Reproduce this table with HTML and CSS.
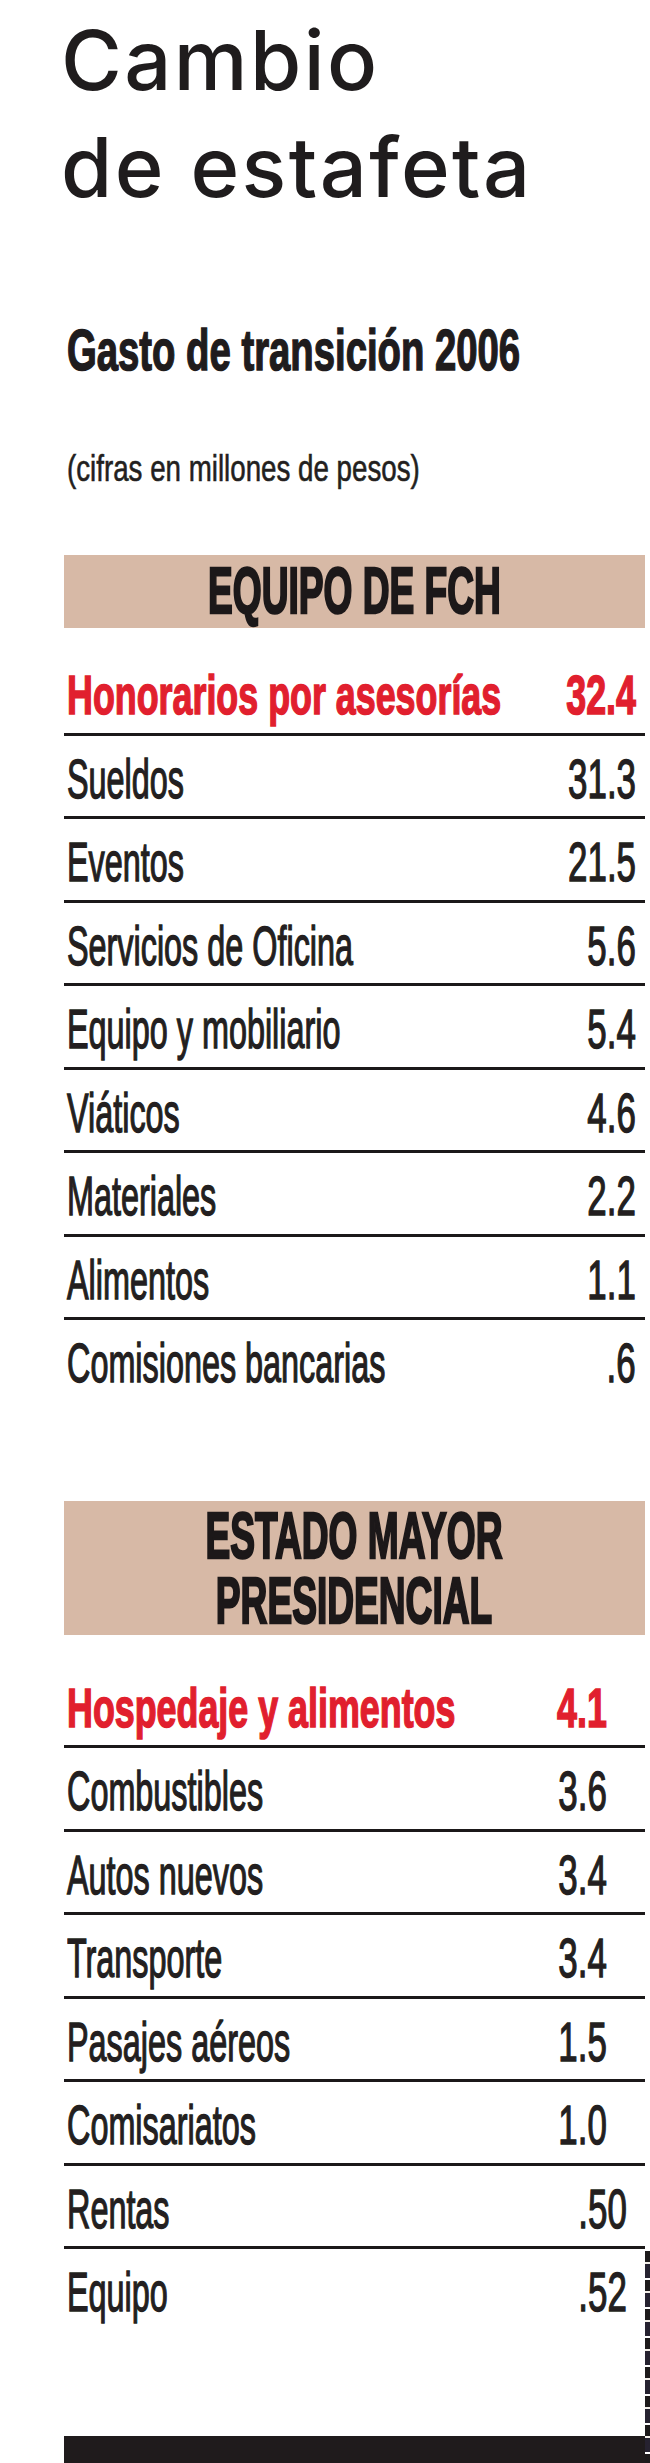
FILE: index.html
```html
<!DOCTYPE html>
<html lang="es">
<head>
<meta charset="utf-8">
<title>Cambio de estafeta</title>
<link rel="stylesheet" href="styles.css">
</head>
<body>
<div class="page">
  <main class="content">
    <h1 class="title">Cambio<br>de estafeta</h1>
    <h2 class="subtitle"><span class="sx-sub">Gasto de transición 2006</span></h2>
    <p class="caption"><span class="sx-cap">(cifras en millones de pesos)</span></p>

    <section class="block block--fch">
      <h3 class="band"><span class="sx-band">EQUIPO DE FCH</span></h3>
      <ul class="rows rows--fch">
        <li class="row row--hl"><span class="name"><span class="sx-b">Honorarios por asesorías</span></span><span class="val"><span class="sx-bv">32.4</span></span></li>
        <li class="row"><span class="name"><span class="sx">Sueldos</span></span><span class="val"><span class="sx-v">31.3</span></span></li>
        <li class="row"><span class="name"><span class="sx">Eventos</span></span><span class="val"><span class="sx-v">21.5</span></span></li>
        <li class="row"><span class="name"><span class="sx">Servicios de Oficina</span></span><span class="val"><span class="sx-v">5.6</span></span></li>
        <li class="row"><span class="name"><span class="sx">Equipo y mobiliario</span></span><span class="val"><span class="sx-v">5.4</span></span></li>
        <li class="row"><span class="name"><span class="sx">Viáticos</span></span><span class="val"><span class="sx-v">4.6</span></span></li>
        <li class="row"><span class="name"><span class="sx">Materiales</span></span><span class="val"><span class="sx-v">2.2</span></span></li>
        <li class="row"><span class="name"><span class="sx">Alimentos</span></span><span class="val"><span class="sx-v">1.1</span></span></li>
        <li class="row"><span class="name"><span class="sx">Comisiones bancarias</span></span><span class="val"><span class="sx-v">.6</span></span></li>
      </ul>
    </section>

    <section class="block block--emp">
      <h3 class="band band--two"><span class="sx-band">ESTADO MAYOR<br>PRESIDENCIAL</span></h3>
      <ul class="rows rows--emp">
        <li class="row row--hl"><span class="name"><span class="sx-b">Hospedaje y alimentos</span></span><span class="val"><span class="sx-bv">4.1</span></span></li>
        <li class="row"><span class="name"><span class="sx">Combustibles</span></span><span class="val"><span class="sx-v">3.6</span></span></li>
        <li class="row"><span class="name"><span class="sx">Autos nuevos</span></span><span class="val"><span class="sx-v">3.4</span></span></li>
        <li class="row"><span class="name"><span class="sx">Transporte</span></span><span class="val"><span class="sx-v">3.4</span></span></li>
        <li class="row"><span class="name"><span class="sx">Pasajes aéreos</span></span><span class="val"><span class="sx-v">1.5</span></span></li>
        <li class="row"><span class="name"><span class="sx">Comisariatos</span></span><span class="val"><span class="sx-v">1.0</span></span></li>
        <li class="row"><span class="name"><span class="sx">Rentas</span></span><span class="val val--short"><span class="sx-v">.50</span></span></li>
        <li class="row"><span class="name"><span class="sx">Equipo</span></span><span class="val val--short"><span class="sx-v">.52</span></span></li>
      </ul>
    </section>

    <div class="footer-bar"></div>
  </main>
  <div class="edge-strip"></div>
</div>
</body>
</html>
```

FILE: styles.css
```css
* { box-sizing: border-box; }

html, body {
  margin: 0;
  padding: 0;
  background: #ffffff;
}

body {
  color: #231f20;
  font-family: "Liberation Sans", Arial, sans-serif;
}

.page {
  display: grid;
  grid-template-columns: 581px 5px;
  padding-left: 64px;
  padding-top: 7px;
  height: 2463px;
  overflow: hidden;
}

.content {
  display: flex;
  flex-direction: column;
  min-width: 0;
}

.edge-strip {
  align-self: end;
  height: 213px;
  background: repeating-linear-gradient(to bottom,
    #1d1a1b 0px, #1d1a1b 11px,
    #f4f0ea 11px, #f4f0ea 13px,
    #262230 13px, #262230 27px,
    #ffffff 27px, #ffffff 29px);
}

/* Title */
.title {
  margin: 0 0 0 -3px;
  font-family: "Inter", "Liberation Sans", Arial, sans-serif;
  font-weight: 500;
  font-size: 83px;
  line-height: 107px;
  letter-spacing: 2.4px;
  color: #1f1c1d;
}

/* Subtitle */
.subtitle {
  margin: 99px 0 0;
  padding-left: 3px;
  font-weight: 700;
  font-size: 58px;
  line-height: 60px;
  white-space: nowrap;
  color: #1f1c1d;
}

.sx-sub {
  display: inline-block;
  transform: scaleX(0.66);
  transform-origin: left center;
  -webkit-text-stroke: 1.5px #1f1c1d;
}

.caption {
  margin: 69px 0 0;
  padding-left: 3px;
  font-size: 36px;
  line-height: 40px;
  white-space: nowrap;
}

.sx-cap {
  display: inline-block;
  transform: scaleX(0.77);
  transform-origin: left center;
  -webkit-text-stroke: 0.6px #231f20;
}

/* Bands */
.block--fch { margin-top: 66px; }
.block--emp { margin-top: 100px; }

.band {
  margin: 0;
  background: #d7b9a6;
  height: 73px;
  font-weight: 700;
  font-size: 64px;
  line-height: 73px;
  text-align: center;
  white-space: nowrap;
  color: #1c1819;
}

.band--two {
  height: 134px;
  line-height: 65px;
  padding: 3px 0 1px;
}

.sx-band {
  display: inline-block;
  transform: scaleX(0.58);
  transform-origin: center center;
  -webkit-text-stroke: 2.5px #1c1819;
}

/* Rows */
.rows {
  list-style: none;
  margin: 0;
  padding: 0;
}

.rows--fch { margin-top: 24px; }
.rows--emp { margin-top: 30px; }

.row {
  display: flex;
  align-items: baseline;
  padding: 13px 0 7.5px;
  font-size: 56px;
  line-height: 60px;
  white-space: nowrap;
  border-bottom: 3px solid #1b1819;
}

.row:last-child {
  border-bottom: none;
}

.name {
  flex: 1 1 0;
  min-width: 0;
  padding-left: 3px;
}

.val {
  flex: none;
  padding-right: 9px;
}
.rows--emp .val { padding-right: 38px; }
.rows--emp .val--short { padding-right: 18px; }

.sx, .sx-b {
  display: inline-block;
  transform-origin: left center;
}
.sx { transform: scaleX(0.578); -webkit-text-stroke: 1.4px #231f20; }
.sx-b { transform: scaleX(0.64); -webkit-text-stroke: 1.6px #e11f2e; }

.sx-v, .sx-bv {
  display: inline-block;
  transform-origin: right center;
}
.sx-v { transform: scaleX(0.623); -webkit-text-stroke: 1.4px #231f20; }
.sx-bv { transform: scaleX(0.64); -webkit-text-stroke: 1.6px #e11f2e; }

.row--hl {
  color: #e11f2e;
  font-weight: 700;
}

/* Footer bar */
.footer-bar {
  margin-top: 106px;
  height: 28px;
  background: #1f1b1c;
}
```
